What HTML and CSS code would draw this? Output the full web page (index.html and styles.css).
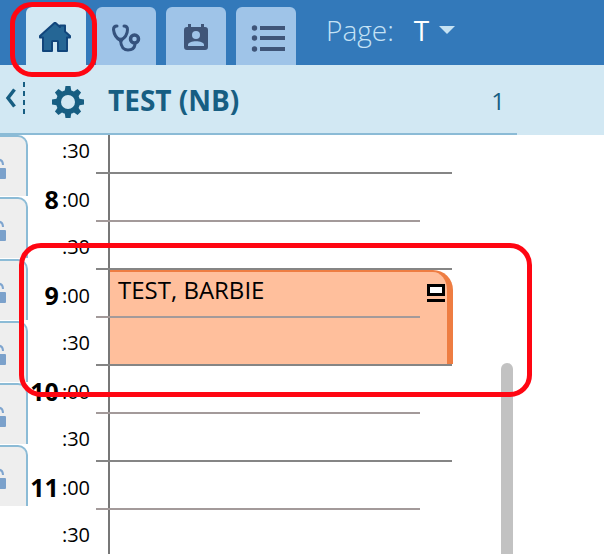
FILE: index.html
```
<!DOCTYPE html>
<html lang="en">
<head>
    <meta charset="UTF-8">
    <meta name="viewport" content="width=device-width, initial-scale=1.0">
    <title>Schedule</title>
    <link rel="stylesheet" href="styles.css">
</head>
<body>
    <header class="topbar">
        <nav class="tabs">
            <button class="tab active" aria-label="Home">
                <svg width="34" height="32" viewBox="1 1 34 32"><path d="M17 1.5 L22 6 V4.5 H27 V10.5 L32 15 V16.5 H29 V30 H20 V21 Q20 20 19 20 H15 Q14 20 14 21 V30 H5 V16.5 H2 V15 Z" fill="#256695" stroke="#11457b" stroke-width="2" stroke-linejoin="round"/></svg>
            </button>
            <button class="tab" aria-label="Clinical">
                <svg width="30" height="30" viewBox="0 0 30 30" fill="none" stroke="#35527d" stroke-linecap="round"><path d="M6 3 Q2.500 3 2.500 6.500 C3 12 5 15 9.500 17.500 C14 15 16.500 12 16.500 6.500 Q16.500 3 13 3" stroke-width="3"/><path d="M9.500 17.500 C10 24 13 27 17 27 C21 27 23.500 25 24 21.500" stroke-width="3"/><path d="M7 15.500 L10 20 L13 15.500 Z" fill="#35527d"/><circle cx="23.500" cy="16" r="4" stroke-width="3.500"/></svg>
            </button>
            <button class="tab" aria-label="Patients">
                <svg width="24" height="28" viewBox="0 0 24 28"><path d="M4 3 V0 H7 V3 H17 V0 H20 V3 H21 Q24 3 24 6 V23 Q24 26 21 26 H3 Q0 26 0 23 V6 Q0 3 3 3 Z" fill="#3f5578"/><circle cx="12" cy="11" r="4" fill="#9fc4e8"/><path d="M4 22 V21 C4 16 20 16 20 21 V22 Z" fill="#9fc4e8"/></svg>
            </button>
            <button class="tab" aria-label="List">
                <svg width="38" height="28" viewBox="-4 0 38 28" fill="#3f5578"><circle cx="3.500" cy="4" r="2.700"/><circle cx="3.500" cy="14" r="2.700"/><circle cx="3.500" cy="25" r="2.700"/><path d="M9 2h25v4H9zM9 12h25v4H9zM9 23h25v4H9z"/></svg>
            </button>
        </nav>
        <span class="page-label">Page:</span>
        <button class="page-picker">T <span class="caret"></span></button>
    </header>

    <div class="provider-bar">
        <div class="provider">
            <button class="collapse" aria-label="Collapse">
                <svg width="11" height="20" viewBox="0 0 11 20"><path d="M9.500 1.500 L3 10 L9.500 18.500" fill="none" stroke="#175e82" stroke-width="3.500"/></svg>
            </button>
            <button class="settings" aria-label="Settings">
                <svg width="32" height="32" viewBox="-16 -16 32 32"><g fill="#175e82"><path id="tooth" d="M-3.500 -10 L-2.500 -16 H2.500 L3.500 -10 V10 L2.500 16 H-2.500 L-3.500 10 Z"/><use href="#tooth" transform="rotate(45)"/><use href="#tooth" transform="rotate(90)"/><use href="#tooth" transform="rotate(135)"/><circle r="12"/></g><circle r="7" fill="#d2e8f3"/></svg>
            </button>
            <h1 class="provider-name">TEST (NB)</h1>
            <span class="provider-count">1</span>
        </div>
    </div>

    <main class="schedule">
        <div class="locks">
            <button class="lock" aria-label="Unlock"><svg width="8" height="26" viewBox="0 0 8 26"><path d="M-2 3.500 Q3 3.500 3 9" fill="none" stroke="#7fa5cf" stroke-width="2"/><rect x="-4" y="12" width="10" height="11" rx="1" fill="#7ba1cb"/></svg></button>
            <button class="lock" aria-label="Unlock"><svg width="8" height="26" viewBox="0 0 8 26"><path d="M-2 3.500 Q3 3.500 3 9" fill="none" stroke="#7fa5cf" stroke-width="2"/><rect x="-4" y="12" width="10" height="11" rx="1" fill="#7ba1cb"/></svg></button>
            <button class="lock" aria-label="Unlock"><svg width="8" height="26" viewBox="0 0 8 26"><path d="M-2 3.500 Q3 3.500 3 9" fill="none" stroke="#7fa5cf" stroke-width="2"/><rect x="-4" y="12" width="10" height="11" rx="1" fill="#7ba1cb"/></svg></button>
            <button class="lock" aria-label="Unlock"><svg width="8" height="26" viewBox="0 0 8 26"><path d="M-2 3.500 Q3 3.500 3 9" fill="none" stroke="#7fa5cf" stroke-width="2"/><rect x="-4" y="12" width="10" height="11" rx="1" fill="#7ba1cb"/></svg></button>
            <button class="lock" aria-label="Unlock"><svg width="8" height="26" viewBox="0 0 8 26"><path d="M-2 3.500 Q3 3.500 3 9" fill="none" stroke="#7fa5cf" stroke-width="2"/><rect x="-4" y="12" width="10" height="11" rx="1" fill="#7ba1cb"/></svg></button>
            <button class="lock" aria-label="Unlock"><svg width="8" height="26" viewBox="0 0 8 26"><path d="M-2 3.500 Q3 3.500 3 9" fill="none" stroke="#7fa5cf" stroke-width="2"/><rect x="-4" y="12" width="10" height="11" rx="1" fill="#7ba1cb"/></svg></button>
        </div>
        <div class="rows">
            <div class="row half"><div class="time">:30</div><div class="slot"></div></div>
            <div class="row"><div class="time"><b>8</b>:00</div><div class="slot"></div></div>
            <div class="row half"><div class="time">:30</div><div class="slot"></div></div>
            <div class="row">
                <div class="time"><b>9</b>:00</div>
                <div class="slot">
                    <div class="appointment">
                        <span>TEST, BARBIE</span>
                        <svg class="status" width="18" height="18" viewBox="0 0 18 18"><rect x="1.500" y="1.500" width="15" height="9" fill="#fff" stroke="#000" stroke-width="3"/><rect y="15" width="18" height="3"/></svg>
                    </div>
                </div>
            </div>
            <div class="row half"><div class="time">:30</div><div class="slot"></div></div>
            <div class="row"><div class="time"><b>10</b>:00</div><div class="slot"></div></div>
            <div class="row half"><div class="time">:30</div><div class="slot"></div></div>
            <div class="row"><div class="time"><b>11</b>:00</div><div class="slot"></div></div>
            <div class="row half"><div class="time">:30</div><div class="slot"></div></div>
        </div>
        <div class="scroll-track"><div class="scroll-thumb"></div></div>
    </main>

    <div class="highlight highlight-home"></div>
    <div class="highlight highlight-appointment"></div>
</body>
</html>
```
FILE: styles.css
```
* {
    box-sizing: border-box;
}
body {
    font-family: "Open Sans", "Noto Sans", sans-serif;
    background-color: #fff;
    color: #000;
    margin: 0;
    height: 100vh;
    display: flex;
    flex-direction: column;
    position: relative;
    overflow: hidden;
}
button {
    border: none;
    background: none;
    padding: 0;
    margin: 0;
    font: inherit;
    color: inherit;
    cursor: pointer;
}
svg {
    display: block;
}

/* top bar */
.topbar {
    display: flex;
    align-items: center;
    height: 65px;
    padding-left: 26px;
    background-color: #3379ba;
    font-size: 28px;
}
.tabs {
    display: flex;
    gap: 10px;
    align-self: flex-end;
}
.tab {
    display: flex;
    align-items: center;
    justify-content: center;
    width: 60px;
    height: 58px;
    padding-top: 4px;
    border-radius: 6px 6px 0 0;
    background-color: #9fc4e8;
}
.tab.active {
    background-color: #d2e8f3;
}
.page-label,
.page-picker {
    padding-bottom: 5px;
}
.page-label {
    margin-left: 30px;
    font-weight: 300;
    color: #c5e2f5;
}
.page-picker {
    display: flex;
    align-items: center;
    gap: 10px;
    margin-left: 20px;
    color: #fff;
}
.caret {
    border: 8px solid transparent;
    border-top-color: #c5e2f3;
    border-bottom: none;
}

/* provider header */
.provider-bar {
    background-color: #d2e8f3;
    color: #175e82;
}
.provider {
    display: flex;
    align-items: center;
    height: 70px;
    margin-right: 87px;
    padding: 2px 12px 0 5px;
    border-bottom: 2px solid #8bbbd6;
}
.collapse {
    padding: 10px 9px 10px 0;
    background: repeating-linear-gradient(#175e82 0 5px, transparent 5px 9px) right / 2px 100% no-repeat;
}
.collapse svg {
    margin-top: -4px;
}
.settings {
    margin: 4px 24px 0 27px;
}
.provider-name {
    flex: 1;
    margin: 0;
    font-size: 28px;
    font-weight: 700;
}
.provider-count {
    font-size: 24px;
}

/* schedule */
.schedule {
    flex: 1;
    display: flex;
    min-height: 0;
    overflow: hidden;
}
.locks {
    display: flex;
    flex-direction: column;
    gap: 1px;
    width: 28px;
}
.lock {
    display: flex;
    align-items: center;
    flex: none;
    height: 61px;
    padding-top: 4px;
    border-top: 2px solid #8bbbd6;
    border-right: 2px solid #8bbbd6;
    border-top-right-radius: 10px;
    background-color: #eee;
}
.rows {
    flex: 1;
    margin-top: -9px;
}
.row {
    display: flex;
    position: relative;
    height: 48px;
}
.row::after {
    content: "";
    position: absolute;
    z-index: 2;
    left: 68px;
    right: 32px;
    bottom: 0;
    height: 2px;
    background-color: #a39a9a;
}
.row.half::after {
    right: 0;
    background-color: #858585;
}
.time {
    display: flex;
    align-items: center;
    justify-content: flex-end;
    width: 80px;
    padding: 2px 18px 0 0;
    font-size: 20px;
}
.half .time {
    padding-top: 0;
}
.time b {
    margin-right: 3px;
    font-size: 25px;
}
.slot {
    position: relative;
    flex: 1;
    border-left: 2px solid #777;
}
.appointment {
    position: absolute;
    z-index: 1;
    top: 0;
    left: 0;
    right: -1px;
    height: 94px;
    display: flex;
    justify-content: space-between;
    align-items: flex-start;
    padding: 1px 2px 0 8px;
    border-top: 2px solid #ee7d42;
    border-right: 6px solid #ee7d42;
    border-top-right-radius: 20px;
    background-color: #ffbf9c;
    font-size: 24px;
}
.status {
    margin-top: 11px;
}
.scroll-track {
    width: 12px;
    margin: 228px 91px 0 49px;
}
.scroll-thumb {
    height: 100%;
    border-radius: 6px 6px 0 0;
    background-color: #c2c2c2;
}

/* red callouts drawn over the page */
.highlight {
    position: absolute;
    z-index: 5;
    border: 5px solid #ff0612;
    pointer-events: none;
}
.highlight-home {
    top: 2px;
    left: 10px;
    width: 87px;
    height: 75px;
    border-radius: 22px;
}
.highlight-appointment {
    top: 243px;
    left: 19px;
    right: 72px;
    height: 154px;
    border-radius: 22px;
}
```
